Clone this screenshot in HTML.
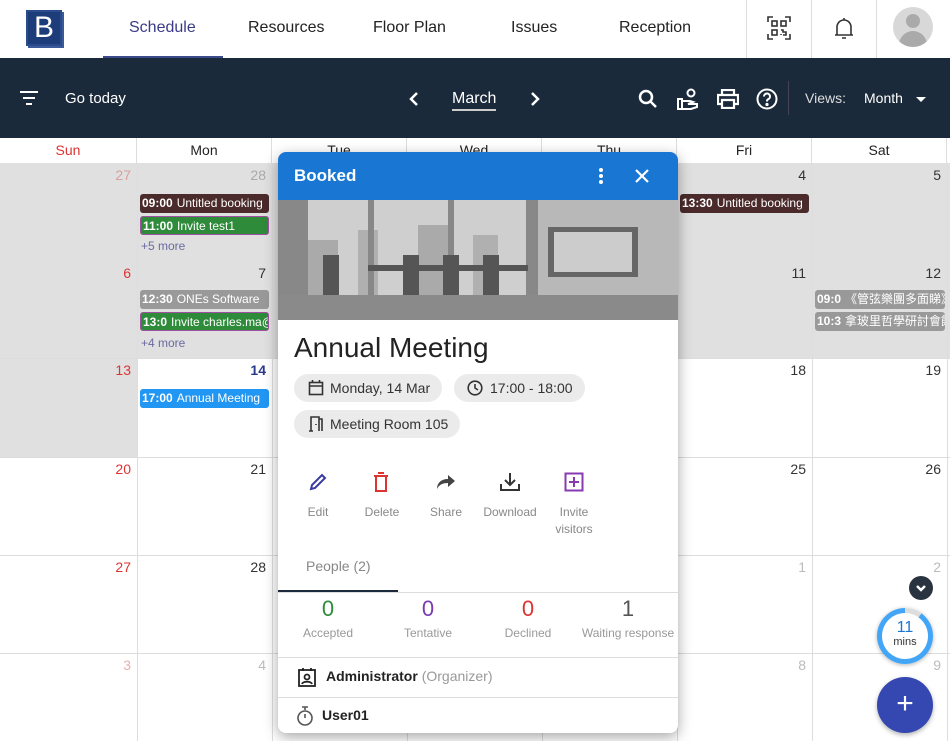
<!DOCTYPE html>
<html><head><meta charset="utf-8"><style>
*{box-sizing:border-box;margin:0;padding:0}
html,body{width:950px;height:741px;overflow:hidden}
body{font-family:"Liberation Sans","Noto Sans CJK TC",sans-serif;background:#fff;position:relative;color:#222}
.a{position:absolute}
.top{left:0;top:0;width:950px;height:58px;background:#fff}
.nav{top:19px;font-size:16px;color:#222}
.bar{left:0;top:58px;width:950px;height:80px;background:#1b2a3a;color:#fff}
.hd{top:138px;height:25px;width:135px;text-align:center;font-size:14px;line-height:25px;border-right:1px solid #ddd;background:#fff}
.g{background:#e0e0e0}
.num{position:absolute;right:6px;top:4px;font-size:14px;color:#333}
.ev{position:absolute;left:3px;width:129px;height:19px;border-radius:3px;font-size:12px;color:#fff;line-height:19px;padding-left:2px;white-space:nowrap;overflow:hidden}
.ev b{margin-right:4px}
.more{position:absolute;left:4px;font-size:12px;color:#6a6aa0}
.chip{position:absolute;height:28px;border-radius:14px;background:#ebebeb;font-size:14px;line-height:28px;padding:0 12px 0 36px;color:#333}
.act{position:absolute;top:352px;font-size:12px;color:#888;text-align:center;width:60px;line-height:17px}
.st{position:absolute;top:444px;width:100px;text-align:center}
.st .n{font-size:22px}
.st .l{font-size:12px;color:#999;margin-top:4px}
.c{position:absolute;width:135px;height:88px;overflow:hidden}
</style></head><body>
<div class="a top">
 <div class="a" style="left:26px;top:10px;width:36px;height:36px;background:#1c3c7a;border:2px solid #2b4c8c;box-shadow:2px 2px 0 #3a5a9a;color:#fff;font-size:30px;line-height:32px;text-align:center">B</div>
 <div class="a nav" style="left:129px;color:#3b3b8a">Schedule</div>
 <div class="a" style="left:103px;top:56px;width:120px;height:2px;background:#3b4a8a"></div>
 <div class="a nav" style="left:248px">Resources</div>
 <div class="a nav" style="left:373px">Floor Plan</div>
 <div class="a nav" style="left:511px">Issues</div>
 <div class="a nav" style="left:619px">Reception</div>
 <div class="a" style="left:746px;top:0;width:1px;height:58px;background:#ddd"></div>
 <div class="a" style="left:811px;top:0;width:1px;height:58px;background:#ddd"></div>
 <div class="a" style="left:876px;top:0;width:1px;height:58px;background:#ddd"></div>
 <svg class="a" style="left:767px;top:16px" width="24" height="24" viewBox="0 0 24 24" fill="none" stroke="#333" stroke-width="1.6"><path d="M1 6V1h5M18 1h5v5M23 18v5h-5M6 23H1v-5"/><rect x="5" y="5" width="5" height="5"/><rect x="14" y="5" width="5" height="5"/><rect x="5" y="14" width="5" height="5"/><path d="M14 14h2v2h3v3h-3M14 18v1"/></svg>
 <svg class="a" style="left:834px;top:17px" width="20" height="24" viewBox="0 0 20 24" fill="none" stroke="#333" stroke-width="1.6"><path d="M3 18V10a7 7 0 0 1 14 0v8zM1 18h18M8 21h4M10 1v2"/></svg>
 <div class="a" style="left:893px;top:7px;width:40px;height:40px;border-radius:50%;background:#d8d8d8;overflow:hidden"><div class="a" style="left:13px;top:7px;width:14px;height:14px;border-radius:50%;background:#aaa"></div><div class="a" style="left:6px;top:24px;width:28px;height:22px;border-radius:14px 14px 0 0;background:#aaa"></div></div>
</div>
<div class="a bar">
 <svg class="a" style="left:20px;top:33px" width="18" height="14" viewBox="0 0 18 14" fill="#fff"><rect y="0" width="18" height="2"/><rect x="3" y="6" width="12" height="2"/><rect x="6" y="12" width="6" height="2"/></svg>
 <div class="a" style="left:65px;top:32px;font-size:15px">Go today</div>
 <svg class="a" style="left:409px;top:34px" width="10" height="14" viewBox="0 0 10 14" fill="none" stroke="#fff" stroke-width="2.5"><path d="M8 1L2 7l6 6"/></svg>
 <div class="a" style="left:452px;top:32px;font-size:16px;border-bottom:2px solid #ccc;padding-bottom:1px">March</div>
 <svg class="a" style="left:530px;top:34px" width="10" height="14" viewBox="0 0 10 14" fill="none" stroke="#fff" stroke-width="2.5"><path d="M2 1l6 6-6 6"/></svg>
 <svg class="a" style="left:638px;top:31px" width="20" height="20" viewBox="0 0 20 20" fill="none" stroke="#fff" stroke-width="2.5"><circle cx="8" cy="8" r="6"/><path d="M12.5 12.5L18 18"/></svg>
 <svg class="a" style="left:676px;top:30px" width="24" height="22" viewBox="0 0 24 22" fill="none" stroke="#fff" stroke-width="2"><circle cx="15" cy="5" r="3.5"/><path d="M2 11h4v10H2zM6 13h8l3 1-5 2h9v3l-6 2H6"/></svg>
 <svg class="a" style="left:717px;top:31px" width="22" height="20" viewBox="0 0 22 20" fill="none" stroke="#fff" stroke-width="2.2"><path d="M5 6V1h12v5M5 15H1V6h20v9h-4M5 11h12v8H5z"/></svg>
 <svg class="a" style="left:756px;top:30px" width="22" height="22" viewBox="0 0 22 22" fill="none" stroke="#fff" stroke-width="2"><circle cx="11" cy="11" r="9.5"/><path d="M8 8.5a3 3 0 1 1 4 2.8c-1 .5-1 1-1 2.2"/><circle cx="11" cy="16.5" r=".6" fill="#fff"/></svg>
 <div class="a" style="left:788px;top:23px;width:1px;height:34px;background:#445"></div>
 <div class="a" style="left:805px;top:32px;font-size:14px;color:#ddd">Views:</div>
 <div class="a" style="left:864px;top:32px;font-size:14px">Month</div>
 <div class="a" style="left:916px;top:39px;border:5px solid transparent;border-top:5px solid #fff"></div>
</div>
<div class="a hd" style="left:0;width:137px;color:#d33">Sun</div>
<div class="a hd" style="left:137px">Mon</div>
<div class="a hd" style="left:272px">Tue</div>
<div class="a hd" style="left:407px">Wed</div>
<div class="a hd" style="left:542px">Thu</div>
<div class="a hd" style="left:677px">Fri</div>
<div class="a hd" style="left:812px">Sat</div>
<div class="a g" style="left:0;top:163px;width:950px;height:195px"></div>
<div class="a g" style="left:0;top:358px;width:137px;height:99px"></div>
<div class="a" style="left:0;top:163px;width:950px;height:578px">
 <div class="a" style="left:137px;top:0;width:1px;height:578px;background:#ddd"></div>
 <div class="a" style="left:272px;top:0;width:1px;height:578px;background:#ddd"></div>
 <div class="a" style="left:407px;top:0;width:1px;height:578px;background:#ddd"></div>
 <div class="a" style="left:542px;top:0;width:1px;height:578px;background:#ddd"></div>
 <div class="a" style="left:677px;top:0;width:1px;height:578px;background:#ddd"></div>
 <div class="a" style="left:812px;top:0;width:1px;height:578px;background:#ddd"></div>
 <div class="a" style="left:947px;top:0;width:1px;height:578px;background:#ddd"></div>
 <div class="a" style="left:0;top:195px;width:950px;height:1px;background:#ddd"></div>
 <div class="a" style="left:0;top:294px;width:950px;height:1px;background:#ddd"></div>
 <div class="a" style="left:0;top:392px;width:950px;height:1px;background:#ddd"></div>
 <div class="a" style="left:0;top:490px;width:950px;height:1px;background:#ddd"></div>
</div>
<div class="c" style="left:0;top:163px;width:137px"><span class="num" style="color:#d9a0a0">27</span></div>
<div class="c" style="left:137px;top:163px"><span class="num" style="color:#aaa">28</span>
 <div class="ev" style="top:31px;background:#4a2a2a"><b>09:00</b>Untitled booking</div>
 <div class="ev" style="top:53px;background:#2e8b3a;border:1px solid #a050a0"><b>11:00</b>Invite test1</div>
 <div class="more" style="top:76px">+5 more</div></div>
<div class="c" style="left:677px;top:163px"><span class="num">4</span>
 <div class="ev" style="top:31px;background:#4a2a2a"><b>13:30</b>Untitled booking</div></div>
<div class="c" style="left:812px;top:163px"><span class="num">5</span></div>
<div class="c" style="left:0;top:261px;width:137px"><span class="num" style="color:#d33">6</span></div>
<div class="c" style="left:137px;top:261px"><span class="num">7</span>
 <div class="ev" style="top:29px;background:#999"><b>12:30</b>ONEs Software</div>
 <div class="ev" style="top:51px;background:#2e8b3a;border:1px solid #a050a0"><b>13:0</b>Invite charles.ma@</div>
 <div class="more" style="top:75px">+4 more</div></div>
<div class="c" style="left:677px;top:261px"><span class="num">11</span></div>
<div class="c" style="left:812px;top:261px"><span class="num">12</span>
 <div class="ev" style="top:29px;background:#999;width:130px"><b>09:0</b>《管弦樂團多面睇》</div>
 <div class="ev" style="top:51px;background:#999;width:130px"><b>10:3</b>拿玻里哲學研討會館</div></div>
<div class="c" style="left:0;top:358px;width:137px"><span class="num" style="color:#d33">13</span></div>
<div class="c" style="left:137px;top:358px"><span class="num" style="color:#2a3a8a;font-weight:bold">14</span>
 <div class="ev" style="top:31px;background:#2196f3"><b>17:00</b>Annual Meeting</div></div>
<div class="c" style="left:677px;top:358px"><span class="num">18</span></div>
<div class="c" style="left:812px;top:358px"><span class="num">19</span></div>
<div class="c" style="left:0;top:457px;width:137px"><span class="num" style="color:#d33">20</span></div>
<div class="c" style="left:137px;top:457px"><span class="num">21</span></div>
<div class="c" style="left:677px;top:457px"><span class="num">25</span></div>
<div class="c" style="left:812px;top:457px"><span class="num">26</span></div>
<div class="c" style="left:0;top:555px;width:137px"><span class="num" style="color:#d33">27</span></div>
<div class="c" style="left:137px;top:555px"><span class="num">28</span></div>
<div class="c" style="left:677px;top:555px"><span class="num" style="color:#bbb">1</span></div>
<div class="c" style="left:812px;top:555px"><span class="num" style="color:#bbb">2</span></div>
<div class="c" style="left:0;top:653px;width:137px"><span class="num" style="color:#e8b0b0">3</span></div>
<div class="c" style="left:137px;top:653px"><span class="num" style="color:#bbb">4</span></div>
<div class="c" style="left:677px;top:653px"><span class="num" style="color:#bbb">8</span></div>
<div class="c" style="left:812px;top:653px"><span class="num" style="color:#bbb">9</span></div>
<div class="a" style="left:909px;top:576px;width:24px;height:24px;border-radius:50%;background:#2a3440"><svg width="24" height="24" viewBox="0 0 24 24" fill="none" stroke="#fff" stroke-width="2.5"><path d="M8 10l4 4 4-4"/></svg></div>
<div class="a" style="left:877px;top:608px;width:56px;height:56px;border-radius:50%;background:conic-gradient(#ddd 0 10%,#42a5f5 10% 100%);box-shadow:0 1px 4px rgba(0,0,0,.3)"><div class="a" style="left:5px;top:5px;width:46px;height:46px;border-radius:50%;background:#fff;text-align:center"><div style="font-size:16px;color:#1976d2;margin-top:7px;line-height:16px">11</div><div style="font-size:11px;color:#333">mins</div></div></div>
<div class="a" style="left:877px;top:677px;width:56px;height:56px;border-radius:50%;background:#3547b0;color:#fff;font-size:30px;text-align:center;line-height:54px;box-shadow:0 2px 5px rgba(0,0,0,.3)">+</div>
<div class="a" style="left:278px;top:152px;width:400px;height:581px;background:#fff;border-radius:8px;box-shadow:0 4px 14px rgba(0,0,0,.35);overflow:hidden">
 <div class="a" style="left:0;top:0;width:400px;height:48px;background:#1976d2;color:#fff">
  <div class="a" style="left:16px;top:14px;font-size:17px;font-weight:bold">Booked</div>
  <svg class="a" style="left:320px;top:15px" width="6" height="18" viewBox="0 0 6 18" fill="#fff"><circle cx="3" cy="3" r="2"/><circle cx="3" cy="9" r="2"/><circle cx="3" cy="15" r="2"/></svg>
  <svg class="a" style="left:357px;top:17px" width="14" height="14" viewBox="0 0 14 14" stroke="#fff" stroke-width="2.2"><path d="M1 1l12 12M13 1L1 13"/></svg>
 </div>
 <svg class="a" style="left:0;top:48px" width="400" height="120" viewBox="0 0 400 120">
  <rect width="400" height="120" fill="#9a9a9a"/>
  <rect x="28" y="0" width="220" height="95" fill="#cfcfcf"/>
  <rect x="30" y="40" width="30" height="55" fill="#aaa"/><rect x="80" y="30" width="20" height="65" fill="#b0b0b0"/><rect x="140" y="25" width="30" height="70" fill="#aaa"/><rect x="195" y="35" width="25" height="60" fill="#b0b0b0"/>
  <rect x="0" y="0" width="30" height="120" fill="#888"/><rect x="90" y="0" width="6" height="95" fill="#888"/><rect x="170" y="0" width="6" height="95" fill="#888"/><rect x="248" y="0" width="12" height="95" fill="#888"/>
  <rect x="260" y="0" width="140" height="95" fill="#b8b8b8"/>
  <rect x="270" y="27" width="90" height="50" fill="#666"/><rect x="276" y="32" width="78" height="40" fill="#ccc"/>
  <rect x="0" y="95" width="400" height="25" fill="#8a8a8a"/>
  <rect x="90" y="65" width="160" height="6" fill="#555"/>
  <rect x="45" y="55" width="16" height="40" fill="#555"/><rect x="125" y="55" width="16" height="40" fill="#555"/><rect x="165" y="55" width="16" height="40" fill="#555"/><rect x="205" y="55" width="16" height="40" fill="#555"/>
 </svg>
 <div class="a" style="left:16px;top:180px;font-size:28px;color:#222">Annual Meeting</div>
 <div class="chip" style="left:16px;top:222px">Monday, 14 Mar</div>
 <svg class="a" style="left:30px;top:228px" width="16" height="16" viewBox="0 0 16 16" fill="none" stroke="#333" stroke-width="1.6"><rect x="1.5" y="2.5" width="13" height="12"/><path d="M1.5 6h13M4.5 0v3M11.5 0v3"/></svg>
 <div class="chip" style="left:176px;top:222px">17:00 - 18:00</div>
 <svg class="a" style="left:189px;top:228px" width="16" height="16" viewBox="0 0 16 16" fill="none" stroke="#333" stroke-width="1.6"><circle cx="8" cy="8" r="6.8"/><path d="M8 4v4l3 2"/></svg>
 <div class="chip" style="left:16px;top:258px">Meeting Room 105</div>
 <svg class="a" style="left:30px;top:264px" width="16" height="16" viewBox="0 0 16 16" fill="none" stroke="#333" stroke-width="1.6"><path d="M3 15V1h8v14M1 15h4M11 3h3v12M8 8v1"/></svg>
 <svg class="a" style="left:30px;top:320px" width="20" height="20" viewBox="0 0 20 20" fill="none" stroke="#3a3aa0" stroke-width="2"><path d="M3 17l1-4L14 3l3 3L7 16z"/></svg>
 <svg class="a" style="left:95px;top:320px" width="16" height="20" viewBox="0 0 16 20" fill="none" stroke="#d33" stroke-width="2"><path d="M1 4h14M5 1h6M3 4v15h10V4"/></svg>
 <svg class="a" style="left:158px;top:322px" width="20" height="16" viewBox="0 0 20 16" fill="#444"><path d="M12 1l7 6-7 6V9C6 9 3 11 1 15c0-6 4-10 11-10z"/></svg>
 <svg class="a" style="left:222px;top:320px" width="20" height="20" viewBox="0 0 20 20" fill="none" stroke="#333" stroke-width="2"><path d="M10 1v11M5 8l5 5 5-5M1 12v6h18v-6"/></svg>
 <svg class="a" style="left:286px;top:320px" width="20" height="20" viewBox="0 0 20 20" fill="none" stroke="#8a3ab0" stroke-width="2"><rect x="1.5" y="1.5" width="17" height="17"/><path d="M10 5v10M5 10h10"/></svg>
 <div class="act" style="left:10px">Edit</div>
 <div class="act" style="left:74px">Delete</div>
 <div class="act" style="left:138px">Share</div>
 <div class="act" style="left:202px">Download</div>
 <div class="act" style="left:266px">Invite<br>visitors</div>
 <div class="a" style="left:28px;top:406px;font-size:14px;color:#888">People (2)</div>
 <div class="a" style="left:0;top:438px;width:120px;height:2px;background:#1b2a3a"></div>
 <div class="a" style="left:0;top:440px;width:400px;height:1px;background:#ddd"></div>
 <div class="st" style="left:0"><div class="n" style="color:#2e8b3a">0</div><div class="l">Accepted</div></div>
 <div class="st" style="left:100px"><div class="n" style="color:#7a3ab0">0</div><div class="l">Tentative</div></div>
 <div class="st" style="left:200px"><div class="n" style="color:#d33">0</div><div class="l">Declined</div></div>
 <div class="st" style="left:300px;white-space:nowrap"><div class="n" style="color:#555">1</div><div class="l">Waiting response</div></div>
 <div class="a" style="left:0;top:505px;width:400px;height:1px;background:#ddd"></div>
 <svg class="a" style="left:20px;top:515px" width="18" height="20" viewBox="0 0 18 20" fill="none" stroke="#222" stroke-width="1.8"><rect x="1" y="3" width="16" height="16"/><path d="M5 1v3M13 1v3"/><circle cx="9" cy="10" r="2.5"/><path d="M4 17c1-3 9-3 10 0"/></svg>
 <div class="a" style="left:48px;top:516px;font-size:14px;font-weight:bold;color:#222">Administrator <span style="font-weight:normal;color:#999">(Organizer)</span></div>
 <div class="a" style="left:0;top:545px;width:400px;height:1px;background:#ddd"></div>
 <svg class="a" style="left:18px;top:554px" width="18" height="20" viewBox="0 0 18 20" fill="none" stroke="#555" stroke-width="1.6"><path d="M6 1h6M9 1v3"/><circle cx="9" cy="12" r="7"/><path d="M9 12V8"/></svg>
 <div class="a" style="left:44px;top:555px;font-size:14px;font-weight:bold;color:#222">User01</div>
</div>
</body></html>
